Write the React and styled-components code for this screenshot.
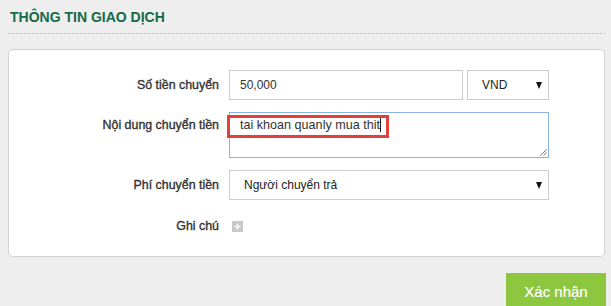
import React from "react";
import styled, { createGlobalStyle } from "styled-components";

const Global = createGlobalStyle`
  html, body { margin: 0; padding: 0; background: #eeeeee; }
  body { font-family: "Liberation Sans", Arial, sans-serif; color: #333; }
`;

const Page = styled.div`
  padding: 0 6px 0 8px;
`;

const Header = styled.div`
  padding: 9px 0 8px 2px;
  border-bottom: 1px dotted #b4b4b4;
`;

const Title = styled.h2`
  margin: 0;
  font-size: 14px;
  line-height: 16px;
  font-weight: bold;
  color: #146a48;
`;

const Panel = styled.div`
  margin-top: 15px;
  background: #fff;
  border: 1px solid #d2d2d2;
  border-radius: 5px;
  padding: 20px 0 16px;
`;

const Form = styled.div`
  display: grid;
  grid-template-columns: 210px 320px;
  column-gap: 10px;
  row-gap: 12px;
`;

const Label = styled.div`
  font-size: 12.4px;
  font-weight: normal;
  -webkit-text-stroke: 0.35px #333;
  line-height: 15px;
  color: #333;
  text-align: right;
  white-space: nowrap;
  align-self: ${(p) => (p.$top ? "start" : "center")};
  padding-top: ${(p) => (p.$top ? "6px" : "0")};
`;

const FieldRow = styled.div`
  display: flex;
  gap: 4px;
  height: ${(p) => p.$h || 30}px;
  align-items: ${(p) => (p.$center ? "center" : "stretch")};
`;

const Input = styled.div`
  box-sizing: border-box;
  width: ${(p) => p.$w}px;
  height: 30px;
  border: 1px solid #cccccc;
  padding: 0 10px;
  font-size: 12px;
  line-height: 28px;
  color: #333;
`;

const Select = styled.div`
  box-sizing: border-box;
  width: ${(p) => p.$w}px;
  height: 30px;
  border: 1px solid #cccccc;
  padding: 0 6px 0 14px;
  display: flex;
  align-items: center;
  justify-content: space-between;
  font-size: 12px;
  color: #222;
`;

const Arrow = styled.span`
  width: 0;
  height: 0;
  border-left: 3.5px solid transparent;
  border-right: 3.5px solid transparent;
  border-top: 7px solid #111;
  margin-top: 1px;
`;

const TextArea = styled.div`
  position: relative;
  box-sizing: border-box;
  width: 320px;
  height: 46px;
  border: 1px solid #8cb2ea;
  padding: 5px 10px;
  font-size: 12.6px;
  line-height: 15px;
  color: #333;
`;

const Caret = styled.span`
  display: inline-block;
  width: 1px;
  height: 14px;
  background: #222;
  vertical-align: -3px;
`;

const Annotation = styled.div`
  position: absolute;
  left: -3px;
  top: 2px;
  width: 162px;
  height: 23px;
  box-sizing: border-box;
  border: 3px solid #e2403c;
  pointer-events: none;
`;

const Grip = styled.svg`
  position: absolute;
  right: 1px;
  bottom: 1px;
`;

const PlusBox = styled.span`
  width: 11px;
  height: 11px;
  margin-left: 3px;
  background: #c9c9c9;
  display: inline-flex;
  align-items: center;
  justify-content: center;
`;

const Footer = styled.div`
  display: flex;
  justify-content: flex-end;
  margin-top: 16px;
`;

const Button = styled.button`
  width: 100px;
  height: 36px;
  margin-right: -1px;
  border: none;
  background: #8dc63f;
  color: #fff;
  font-family: "Liberation Sans", Arial, sans-serif;
  font-size: 15px;
  -webkit-text-stroke: 0.2px #fff;
  padding: 0;
  cursor: pointer;
`;

export default function App() {
  return (
    <Page>
      <Global />
      <Header>
        <Title>THÔNG TIN GIAO DỊCH</Title>
      </Header>
      <Panel>
        <Form>
          <Label>Số tiền chuyển</Label>
          <FieldRow>
            <Input $w={234}>50,000</Input>
            <Select $w={82}>
              <span>VND</span>
              <Arrow />
            </Select>
          </FieldRow>

          <Label $top>Nội dung chuyển tiền</Label>
          <FieldRow $h={46}>
            <TextArea>
              tai khoan quanly mua thit<Caret />
              <Annotation />
              <Grip width="8" height="8" viewBox="0 0 8 8">
                <path d="M7.5 1.5 L1.5 7.5 M7.5 4.5 L4.5 7.5" stroke="#777" strokeWidth="1" fill="none" />
              </Grip>
            </TextArea>
          </FieldRow>

          <Label>Phí chuyển tiền</Label>
          <FieldRow>
            <Select $w={320}>
              <span>Người chuyển trả</span>
              <Arrow />
            </Select>
          </FieldRow>

          <Label>Ghi chú</Label>
          <FieldRow $h={28} $center>
            <PlusBox>
              <svg width="7" height="7" viewBox="0 0 7 7">
                <path d="M3.5 0.5 V6.5 M0.5 3.5 H6.5" stroke="#fff" strokeWidth="1.4" />
              </svg>
            </PlusBox>
          </FieldRow>
        </Form>
      </Panel>
      <Footer>
        <Button>Xác nhận</Button>
      </Footer>
    </Page>
  );
}
